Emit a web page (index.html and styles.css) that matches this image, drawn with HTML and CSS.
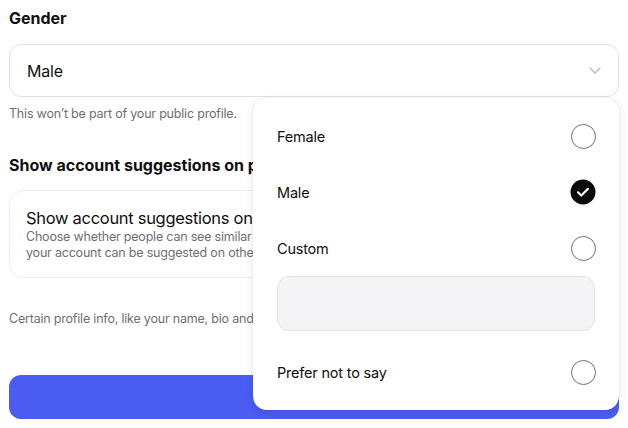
FILE: index.html
```html
<!DOCTYPE html>
<html lang="en">
<head>
<meta charset="utf-8">
<title>Gender</title>
<link rel="stylesheet" href="styles.css">
</head>
<body>
<main class="page">
  <h2 class="section-title">Gender</h2>
  <div class="select">
    <span class="select-value">Male</span>
    <svg class="chevron" width="12" height="7" viewBox="0 0 12 7"><path d="M1 1l5 5 5-5" fill="none" stroke="#b5b5b5" stroke-width="1.2" stroke-linecap="round" stroke-linejoin="round"/></svg>
  </div>
  <p class="help">This won’t be part of your public profile.</p>

  <h2 class="section-title second">Show account suggestions on profiles</h2>
  <div class="card">
    <div class="card-title">Show account suggestions on profiles</div>
    <div class="card-desc">Choose whether people can see similar account suggestions on your profile, and whether<br>your account can be suggested on other profiles.</div>
  </div>
  <p class="help info">Certain profile info, like your name, bio and links, is visible to everyone.</p>

  <button class="submit" type="button">Submit</button>

  <div class="menu">
    <div class="option"><span>Female</span><span class="radio"></span></div>
    <div class="option"><span>Male</span>
      <svg class="radio-checked" width="26" height="26" viewBox="0 0 26 26"><circle cx="13" cy="13" r="12.5" fill="#0a0a0a"/><path d="M8 13.3l3.3 3.2L18 9.8" fill="none" stroke="#fff" stroke-width="2.2" stroke-linecap="round" stroke-linejoin="round"/></svg>
    </div>
    <div class="option"><span>Custom</span><span class="radio"></span></div>
    <div class="custom-input"></div>
    <div class="option last"><span>Prefer not to say</span><span class="radio"></span></div>
  </div>
</main>
</body>
</html>
```

FILE: styles.css
```css
* { box-sizing: border-box; }
html, body { margin: 0; padding: 0; background: #fff; }
body {
  font-family: Inter, "Noto Sans", "Liberation Sans", sans-serif;
  color: #0f0f0f;
  width: 628px;
  height: 428px;
  overflow: hidden;
}
.page {
  position: relative;
  padding: 8px 9px 0 9px;
}
.section-title {
  margin: 0;
  font-size: 16px;
  line-height: 20px;
  font-weight: 700;
  white-space: nowrap;
  overflow: hidden;
}
.section-title.second { margin-top: 33px; }
.select {
  margin-top: 16px;
  height: 53px;
  border: 1px solid #e2e2e4;
  border-radius: 12px;
  display: flex;
  align-items: center;
  justify-content: space-between;
  padding: 0 17px 0 17px;
}
.select-value { font-size: 16px; letter-spacing: -0.2px; }
.help {
  margin: 9px 0 0 0;
  font-size: 12.5px;
  line-height: 16px;
  color: #6f6f73;
  white-space: nowrap;
  letter-spacing: -0.2px;
}
.help.info { margin-top: 33px; }
.card {
  margin-top: 15px;
  height: 88px;
  border: 1px solid #ececee;
  border-radius: 14px;
  padding: 17px 16px 0 16px;
}
.card-title {
  font-size: 16.5px;
  line-height: 20px;
  white-space: nowrap;
  letter-spacing: -0.3px;
}
.card-desc {
  margin-top: 1px;
  font-size: 12.5px;
  line-height: 16px;
  color: #6f6f73;
  white-space: nowrap;
  letter-spacing: -0.2px;
}
.submit {
  display: block;
  width: 100%;
  margin-top: 48px;
  height: 44px;
  border: 0;
  border-radius: 12px;
  background: #4a5cf2;
  color: #fff;
  font-family: inherit;
  font-size: 16px;
  font-weight: 600;
}
.menu {
  position: absolute;
  left: 253px;
  top: 98px;
  width: 366px;
  height: 312px;
  background: #fff;
  border-radius: 14px;
  box-shadow: 0 2px 10px rgba(0,0,0,0.10), 0 0 1px rgba(0,0,0,0.12);
  padding: 10px 24px 10px 24px;
  display: flex;
  flex-direction: column;
}
.option {
  height: 56px;
  display: flex;
  align-items: center;
  justify-content: space-between;
  font-size: 14.5px;
  letter-spacing: -0.2px;
}
.option.last { margin-top: 13px; }
.radio {
  width: 25px;
  height: 25px;
  border-radius: 50%;
  border: 1.2px solid #707070;
  margin-right: -1px;
}
.radio-checked { margin-right: -1px; }
.custom-input {
  height: 55px;
  background: #f4f4f6;
  border: 1px solid #e2e2e6;
  border-radius: 12px;
}
```
